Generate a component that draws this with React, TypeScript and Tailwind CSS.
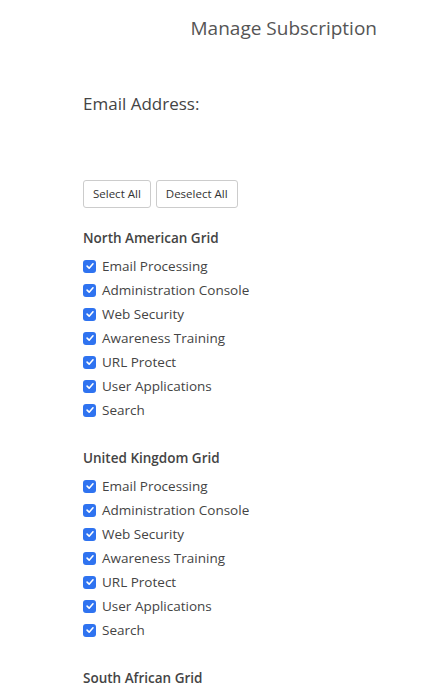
const grids = ['North American Grid', 'United Kingdom Grid', 'South African Grid']
const services = [
  'Email Processing',
  'Administration Console',
  'Web Security',
  'Awareness Training',
  'URL Protect',
  'User Applications',
  'Search',
]

function CheckMark() {
  return (
    <span className="flex h-[13px] w-[13px] shrink-0 items-center justify-center rounded-[3px] bg-[#2f73f0]">
      <svg viewBox="0 0 12 12" className="h-[10px] w-[10px]" fill="none">
        <path d="M2.5 6.2 L5 8.6 L9.6 3.4" stroke="white" strokeWidth="1.9" strokeLinecap="round" strokeLinejoin="round" />
      </svg>
    </span>
  )
}

export default function App() {
  return (
    <div className="h-[693px] overflow-hidden bg-white font-['Open_Sans',sans-serif] text-[#333]">
      <div className="flex justify-end pr-[55px] pt-[14px]">
        <h1 className="text-[19px] leading-[28px] text-[#555]">Manage Subscription</h1>
      </div>

      <div className="pl-[83px]">
        <p className="mt-[50px] text-[17px] leading-[24px] text-[#444]">Email Address:</p>

        <div className="mt-[64px] flex gap-[5px]">
          <button type="button" className="h-[28px] rounded-[3px] border border-[#ccc] bg-white px-[9px] text-[11.5px] text-[#333]">
            Select All
          </button>
          <button type="button" className="h-[28px] rounded-[3px] border border-[#ccc] bg-white px-[9px] text-[11.5px] text-[#333]">
            Deselect All
          </button>
        </div>

        {grids.map((grid, i) => (
          <section key={grid} className={i === 0 ? 'mt-[20px]' : 'mt-[26px]'}>
            <h2 className="text-[13.5px] font-semibold leading-[20px] text-[#444]">{grid}</h2>
            <ul className="mt-[6px]">
              {services.map((s) => (
                <li key={s} className="flex h-[24px] items-center gap-[6px]">
                  <CheckMark />
                  <span className="text-[13.5px] text-[#444]">{s}</span>
                </li>
              ))}
            </ul>
          </section>
        ))}
      </div>
    </div>
  )
}
